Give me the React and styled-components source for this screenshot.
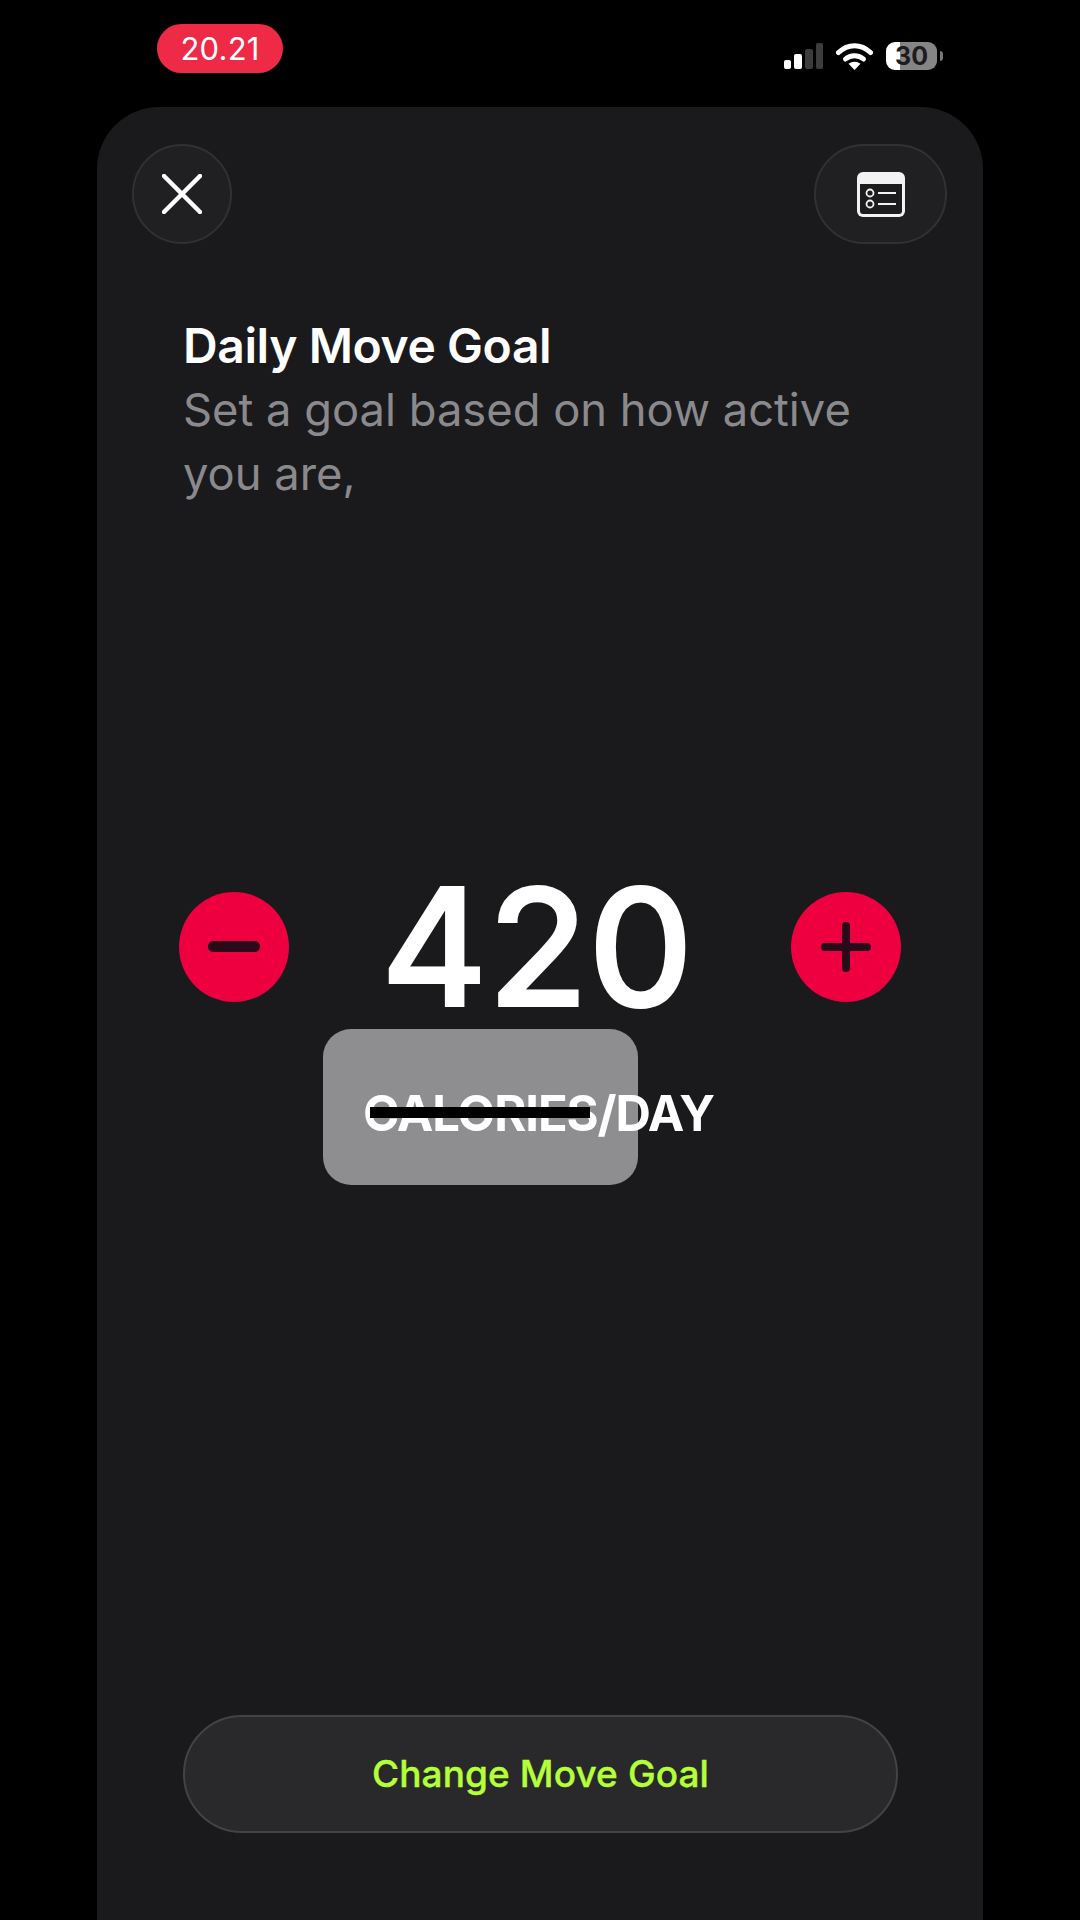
import React from "react";
import styled, { createGlobalStyle } from "styled-components";

const GlobalStyle = createGlobalStyle`
  html, body {
    margin: 0;
    padding: 0;
    background: #000;
  }
  * {
    box-sizing: border-box;
  }
`;

const Screen = styled.div`
  width: 1080px;
  height: 1920px;
  background: #000;
  display: flex;
  flex-direction: column;
  overflow: hidden;
  font-family: Inter, "Liberation Sans", sans-serif;
`;

const StatusBar = styled.div`
  height: 107px;
  flex: none;
  display: flex;
  justify-content: space-between;
  padding: 24px 143px 0 157px;
`;

const TimePill = styled.div`
  width: 126px;
  height: 49px;
  border-radius: 25px;
  background: #ee2a47;
  color: #fff;
  font-size: 31px;
  line-height: 49px;
  letter-spacing: 0.2px;
  text-align: center;
`;

const StatusIcons = styled.div`
  display: flex;
  align-items: center;
  height: 28px;
  margin-top: 18px;
`;

const SignalSlot = styled.span`
  display: flex;
  margin-right: 13px;
`;

const Battery = styled.div`
  position: relative;
  width: 51px;
  height: 28px;
  margin-left: 13px;
  border-radius: 9px;
  background: linear-gradient(90deg, #fff 0 28%, #858585 28% 100%);
  color: #1c1c1e;
  font-size: 25px;
  font-weight: 700;
  line-height: 28px;
  text-align: center;

  &::after {
    content: "";
    position: absolute;
    right: -6px;
    top: 9px;
    width: 3px;
    height: 10px;
    border-radius: 0 3px 3px 0;
    background: #777;
  }
`;

const Sheet = styled.div`
  flex: 1;
  margin: 0 97px;
  padding: 37px 36px 0 35px;
  background: #1a1a1c;
  border-radius: 62px 62px 0 0;
  display: flex;
  flex-direction: column;
`;

const TopRow = styled.div`
  display: flex;
  justify-content: space-between;
`;

const RoundButton = styled.div`
  width: ${(p) => p.$width}px;
  height: 100px;
  border-radius: 50px;
  border: 2px solid #313133;
  background: #202022;
  display: flex;
  align-items: center;
  justify-content: center;
`;

const Heading = styled.div`
  margin: 70px 0 0 51px;
`;

const Title = styled.h1`
  margin: 0;
  color: #fff;
  font-size: 48px;
  font-weight: 600;
  line-height: 64px;
  letter-spacing: -0.4px;
`;

const Subtitle = styled.p`
  margin: 0;
  width: 700px;
  color: #8a8a8e;
  font-size: 45.3px;
  font-weight: 400;
  line-height: 64px;
`;

const Stepper = styled.div`
  margin: 386px 0 0 47px;
  width: 722px;
  height: 110px;
  display: flex;
  align-items: center;
  justify-content: space-between;
`;

const StepButton = styled.div`
  width: 110px;
  height: 110px;
  border-radius: 50%;
  background: #ee0040;
  display: flex;
  align-items: center;
  justify-content: center;
`;

const Value = styled.div`
  color: #fff;
  font-size: 163px;
  font-weight: 500;
  line-height: 110px;
  margin-left: -6px;
  -webkit-text-stroke: 2px #fff;
`;

const UnitArea = styled.div`
  position: relative;
  margin-top: 27px;
  height: 156px;
`;

const Unit = styled.div`
  padding: 56px 0 0 231px;
  color: #fff;
  font-size: 49px;
  font-weight: 700;
  line-height: 58px;
  letter-spacing: -1.1px;
  white-space: nowrap;
`;

const RedactBox = styled.div`
  position: absolute;
  left: 191px;
  top: 0;
  width: 315px;
  height: 156px;
  border-radius: 28px;
  background: #8e8e90;
`;

const RedactText = styled.span`
  position: relative;
`;

const RedactBar = styled.div`
  position: absolute;
  left: 238px;
  top: 78px;
  width: 220px;
  height: 11px;
  background: #000;
`;

const GoalButton = styled.div`
  margin: auto 0 87px 51px;
  width: 715px;
  height: 118px;
  border-radius: 59px;
  border: 2px solid #434345;
  background: #29292b;
  color: #b4ff39;
  font-size: 37px;
  font-weight: 500;
  line-height: 114px;
  letter-spacing: 0.1px;
  text-align: center;
  -webkit-text-stroke: 0.4px #b4ff39;
`;

const SignalIcon = () => (
  <svg width="39" height="26" viewBox="0 0 39 26">
    <rect x="0" y="17" width="7" height="9" rx="2" fill="#fff" />
    <rect x="10" y="11" width="8" height="15" rx="2" fill="#fff" />
    <rect x="21" y="6" width="8" height="20" rx="2" fill="#3c3c3c" />
    <rect x="32" y="0" width="7" height="26" rx="2" fill="#3c3c3c" />
  </svg>
);

const WifiIcon = () => (
  <svg width="37" height="27" viewBox="0 0 37 27">
    <path d="M2.500 9.500C12 0.500 25 0.500 34.500 9.500" fill="none" stroke="#fff" strokeWidth="5" strokeLinecap="round" />
    <path d="M9.500 16C14.500 11.500 22.500 11.500 27.500 16" fill="none" stroke="#fff" strokeWidth="5" strokeLinecap="round" />
    <path d="M18.500 27L12.500 20.800C16 18 21 18 24.500 20.800Z" fill="#fff" />
  </svg>
);

const CloseIcon = () => (
  <svg width="40" height="40" viewBox="0 0 40 40">
    <path d="M2 2L38 38M38 2L2 38" stroke="#fff" strokeWidth="4.500" strokeLinecap="round" />
  </svg>
);

const ListIcon = () => (
  <svg width="48" height="45" viewBox="0 0 48 45">
    <rect width="48" height="45" rx="6" fill="#f2f2f2" />
    <path d="M3 12H45V39a3 3 0 0 1-3 3H6a3 3 0 0 1-3-3Z" fill="#1c1c1e" />
    <circle cx="13" cy="21" r="3.500" fill="none" stroke="#f2f2f2" strokeWidth="1.800" />
    <circle cx="13" cy="32" r="3.500" fill="none" stroke="#f2f2f2" strokeWidth="1.800" />
    <path d="M21 21H39M21 32H39" stroke="#f2f2f2" strokeWidth="2" />
  </svg>
);

const MinusIcon = () => (
  <svg width="52" height="12" viewBox="0 0 52 12">
    <rect width="52" height="11" rx="5.500" fill="#2a0a18" />
  </svg>
);

const PlusIcon = () => (
  <svg width="50" height="50" viewBox="0 0 50 50">
    <path d="M25 4V46M4 25H46" stroke="#2a0a18" strokeWidth="8" strokeLinecap="round" />
  </svg>
);

export default function App() {
  return (
    <>
      <GlobalStyle />
      <Screen>
        <StatusBar>
          <TimePill>20.21</TimePill>
          <StatusIcons>
            <SignalSlot>
              <SignalIcon />
            </SignalSlot>
            <WifiIcon />
            <Battery>30</Battery>
          </StatusIcons>
        </StatusBar>
        <Sheet>
          <TopRow>
            <RoundButton $width={100}>
              <CloseIcon />
            </RoundButton>
            <RoundButton $width={133}>
              <ListIcon />
            </RoundButton>
          </TopRow>
          <Heading>
            <Title>Daily Move Goal</Title>
            <Subtitle>Set a goal based on how active you are,</Subtitle>
          </Heading>
          <Stepper>
            <StepButton>
              <MinusIcon />
            </StepButton>
            <Value>420</Value>
            <StepButton>
              <PlusIcon />
            </StepButton>
          </Stepper>
          <UnitArea>
            <RedactBox />
            <Unit>
              <RedactText>CALORIES/DAY</RedactText>
            </Unit>
            <RedactBar />
          </UnitArea>
          <GoalButton>Change Move Goal</GoalButton>
        </Sheet>
      </Screen>
    </>
  );
}
